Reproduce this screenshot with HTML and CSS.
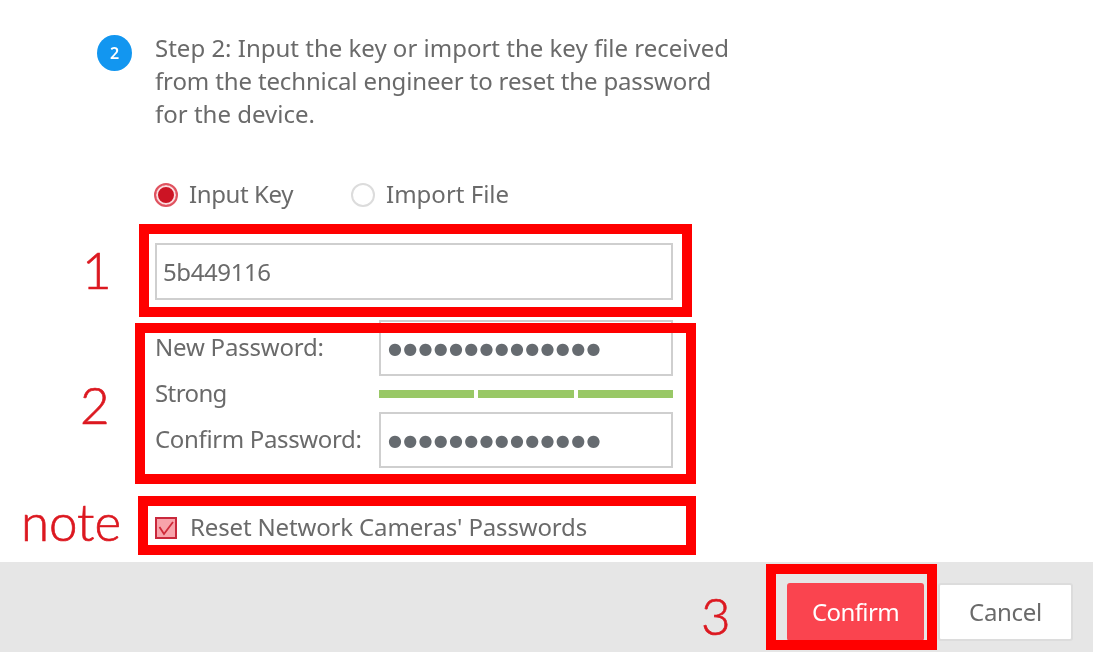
FILE: index.html
```html
<!DOCTYPE html>
<html lang="en">
<head>
<meta charset="utf-8">
<title>Reset password</title>
<link rel="stylesheet" href="styles.css">
</head>
<body>
<main class="panel">
  <section class="step">
    <span class="step-badge">2</span>
    <p class="step-text">Step 2: Input the key or import the key file received<br><span class="tight-line">from the technical engineer to reset the password</span><br>for the device.</p>
  </section>
  <div class="radios">
    <span class="radio radio-on"></span><span class="radio-label label-key">Input Key</span>
    <span class="radio radio-off"></span><span class="radio-label">Import File</span>
  </div>
  <div class="field field-key">5b449116</div>
  <div class="passwords">
    <span class="label label-new">New Password:</span>
    <div class="field field-dots">●●●●●●●●●●●●●●</div>
    <span class="label label-strong">Strong</span>
    <div class="strength"><i></i><i></i><i></i></div>
    <span class="label label-confirm">Confirm Password:</span>
    <div class="field field-dots">●●●●●●●●●●●●●●</div>
  </div>
  <div class="check-row">
    <svg class="checkbox" viewBox="0 0 22 22" aria-hidden="true">
      <rect x="1" y="1" width="20" height="20" fill="#f8a3ab" stroke="#c9283c" stroke-width="2"/>
      <path d="M4.5 10 L9 17 L18 5" fill="none" stroke="#cf2a3a" stroke-width="1.8"/>
    </svg>
    <span class="check-label">Reset Network Cameras' Passwords</span>
  </div>
</main>
<footer class="actions">
  <button class="btn btn-primary">Confirm</button>
  <button class="btn btn-plain">Cancel</button>
</footer>

<div class="mark mark-1"></div>
<div class="mark mark-2"></div>
<div class="mark mark-note"></div>
<div class="mark mark-3"></div>
<span class="tag tag-1">1</span>
<span class="tag tag-2">2</span>
<span class="tag tag-note">note</span>
<span class="tag tag-3">3</span>
</body>
</html>
```
FILE: styles.css
```css
* { box-sizing: border-box; }
html, body { margin: 0; height: 100%; }
body {
  position: relative;
  width: 1093px;
  height: 652px;
  overflow: hidden;
  display: flex;
  flex-direction: column;
  background: #fff;
  color: #6a6a6a;
  font-family: "Noto Sans", "Liberation Sans", sans-serif;
  font-size: 24px;
  filter: blur(0.4px);
}
.panel { flex: 1; padding: 33px 0 0 155px; }

.step { display: flex; margin-left: -58px; gap: 23px; }
.step-badge {
  flex: none;
  width: 35px;
  height: 36px;
  margin-top: 2px;
  border-radius: 50%;
  background: #1296f0;
  color: #fff;
  font-size: 16px;
  font-weight: 600;
  line-height: 36px;
  text-align: center;
}
.step-text { margin: -2px 0 2px; line-height: 33px; }
.tight-line { letter-spacing: -0.14px; }

.radios { display: flex; align-items: center; height: 24px; margin: 51px 0 0 -1px; }
.radio { flex: none; width: 24px; height: 24px; border-radius: 50%; background: #fff; }
.radio-on { border: 2px solid #e0525f; box-shadow: inset 0 0 0 2px #fbdcdf, inset 0 0 0 10px #cc1424; }
.radio-off { border: 2px solid #dcdcdc; }
.radio-label { margin: -3px 58px 0 11px; }
.label-key { letter-spacing: -0.4px; }

.field { border: 2px solid #cfcfcf; background: #fff; height: 57px; display: flex; align-items: center; }
.field-key { width: 518px; margin-top: 36px; padding-left: 6px; letter-spacing: -0.4px; }
.field-dots { height: 56px; padding-left: 7px; color: #666b70; font-family: "DejaVu Sans", sans-serif; font-size: 16px; letter-spacing: 1.3px; }

.passwords {
  display: grid;
  grid-template-columns: 224px 294px;
  grid-template-rows: 56px 8px 56px;
  row-gap: 14px;
  align-items: center;
  margin-top: 20px;
}
.label { margin-top: -4px; }
.label-new { letter-spacing: -0.2px; }
.label-strong { letter-spacing: -0.6px; }
.label-confirm { letter-spacing: -0.35px; }
.strength { display: flex; gap: 4px; height: 8px; }
.strength i { flex: 1; background: #99c866; }

.check-row { display: flex; align-items: center; gap: 13px; margin-top: 49px; height: 22px; }
.checkbox { flex: none; width: 22px; height: 22px; }
.check-label { margin-top: -4px; letter-spacing: -0.15px; }

.actions {
  flex: none;
  height: 90px;
  padding: 21px 20px 0 0;
  display: flex;
  justify-content: flex-end;
  align-items: flex-start;
  gap: 14px;
  background: #e6e6e6;
}
.btn { height: 58px; font: inherit; border-radius: 3px; padding: 0 0 2px; }
.btn-primary { width: 137px; background: #fa444f; border: 0; color: #fff; letter-spacing: -0.6px; }
.btn-plain { width: 135px; background: #fff; border: 2px solid #dcdcdc; color: #6a6a6a; letter-spacing: -0.3px; }

.mark { position: absolute; border: 10px solid #ff0000; }
.mark-1 { left: 139px; top: 224px; width: 553px; height: 93px; }
.mark-2 { left: 135px; top: 323px; width: 561px; height: 161px; }
.mark-note { left: 138px; top: 496px; width: 558px; height: 59px; }
.mark-3 { left: 766px; top: 564px; width: 171px; height: 86px; }

.tag { position: absolute; color: #dc1820; font-size: 51px; font-weight: 300; -webkit-text-stroke: 0.7px #dc1820; line-height: 60px; font-family: Lato, sans-serif; }
.tag-1 { left: 82px; top: 240px; }
.tag-2 { left: 80px; top: 375px; }
.tag-note { left: 21px; top: 492px; }
.tag-3 { left: 701px; top: 586px; }
```
